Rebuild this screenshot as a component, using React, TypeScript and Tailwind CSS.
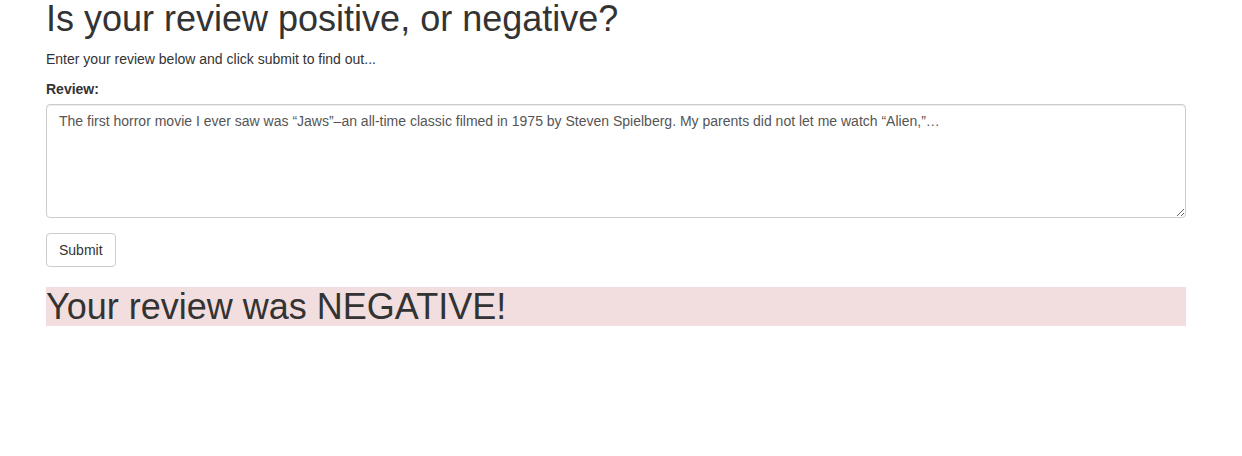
const review =
  "The first horror movie I ever saw was \u201cJaws\u201d\u2013an all-time classic filmed in 1975 by Steven Spielberg. My parents did not let me watch \u201cAlien,\u201d\u2026";

export default function App() {
  return (
    <div className="min-h-[456px] overflow-hidden bg-white font-['Liberation_Sans',Arial,sans-serif] text-[14px] leading-[20px] text-[#333]">
      <div className="ml-[46px] mt-[-1px] w-[1140px]">
        <h1 className="mb-[10px] text-[36px] leading-[1.1] font-normal">
          Is your review positive, or negative?
        </h1>
        <p className="mb-[10px]">Enter your review below and click submit to find out...</p>
        <form className="flex flex-col">
          <div className="mb-[15px] flex flex-col items-start">
            <label htmlFor="review" className="mb-[5px] font-bold">
              Review:
            </label>
            <textarea
              id="review"
              rows={5}
              defaultValue={review}
              className="block w-full rounded-[4px] border border-[#ccc] bg-white px-[12px] py-[6px] text-[14px] leading-[20px] text-[#555] shadow-[inset_0_1px_1px_rgba(0,0,0,0.075)] outline-none"
            />
          </div>
          <div>
            <button
              type="button"
              className="h-[34px] rounded-[4px] border border-[#ccc] bg-white px-[12px] py-[6px] text-[14px] leading-[20px] text-[#333]"
            >
              Submit
            </button>
          </div>
        </form>
        <h1 className="mt-[20px] bg-[#f2dede] text-[36px] leading-[1.1] font-normal">
          Your review was NEGATIVE!
        </h1>
      </div>
    </div>
  );
}
